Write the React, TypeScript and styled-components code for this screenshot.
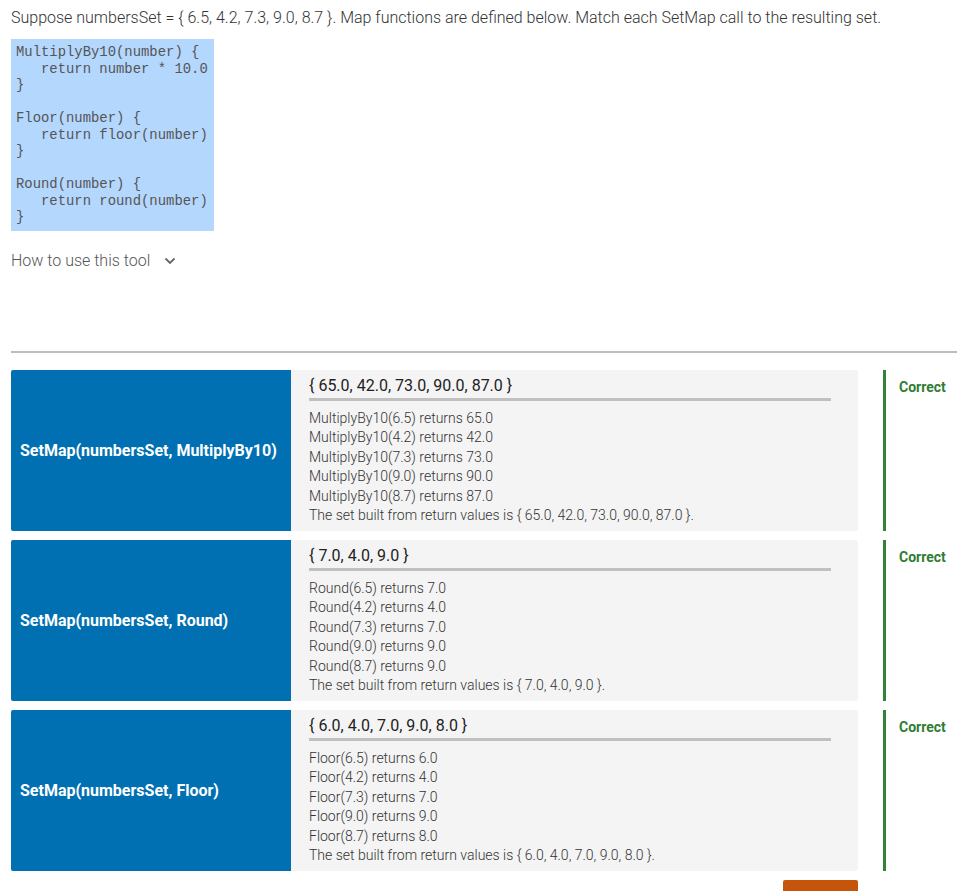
import styled, { createGlobalStyle } from "styled-components";

const GlobalStyle = createGlobalStyle`
  body {
    margin: 0;
    background: #ffffff;
    font-family: Roboto, "Liberation Sans", sans-serif;
    color: #333333;
  }
`;

const rows = [
  {
    call: "SetMap(numbersSet, MultiplyBy10)",
    fn: "MultiplyBy10",
    outs: ["65.0", "42.0", "73.0", "90.0", "87.0"],
  },
  {
    call: "SetMap(numbersSet, Round)",
    fn: "Round",
    outs: ["7.0", "4.0", "7.0", "9.0", "9.0"],
  },
  {
    call: "SetMap(numbersSet, Floor)",
    fn: "Floor",
    outs: ["6.0", "4.0", "7.0", "9.0", "8.0"],
  },
];

const inputs = ["6.5", "4.2", "7.3", "9.0", "8.7"];

function uniq(list: string[]) {
  return list.filter((v, i) => list.indexOf(v) === i);
}

export default function App() {
  return (
    <>
      <GlobalStyle />
      <Page>
        <Intro>
          Suppose numbersSet = {"{"} 6.5, 4.2, 7.3, 9.0, 8.7 {"}"}. Map functions are defined
          below. Match each SetMap call to the resulting set.
        </Intro>
        <Code>{`MultiplyBy10(number) {
   return number * 10.0
}

Floor(number) {
   return floor(number)
}

Round(number) {
   return round(number)
}`}</Code>
        <HowTo>
          How to use this tool
          <svg width="12" height="8" viewBox="0 0 12 8">
            <path d="M1.5 1.5 L6 6 L10.5 1.5" fill="none" stroke="#666" strokeWidth="1.8" />
          </svg>
        </HowTo>
        <Divider />
        <Rows>
          {rows.map((r) => {
            const set = uniq(r.outs).join(", ");
            return (
              <Row key={r.call}>
                <CallBox>{r.call}</CallBox>
                <AnswerBox>
                  <SetTitle>{`{ ${set} }`}</SetTitle>
                  <Explain>
                    {inputs.map((x, i) => (
                      <div key={x}>
                        {r.fn}({x}) returns {r.outs[i]}
                      </div>
                    ))}
                    <div>The set built from return values is {`{ ${set} }`}.</div>
                  </Explain>
                </AnswerBox>
                <Feedback>Correct</Feedback>
              </Row>
            );
          })}
        </Rows>
        <Footer>
          <CheckButton />
        </Footer>
      </Page>
    </>
  );
}

const Page = styled.div`
  padding: 8px 3px 0 11px;
`;

const Intro = styled.p`
  margin: 0;
  font-size: 16px;
  font-weight: 300;
  line-height: 20px;
  color: #333;
`;

const Code = styled.pre`
  margin: 11px 0 0;
  width: 203px;
  box-sizing: border-box;
  padding: 5px 2px 5px 5px;
  background: #b4d7fe;
  font-family: "Liberation Mono", "Courier New", monospace;
  font-size: 13.9px;
  line-height: 16.5px;
  color: #555;
`;

const HowTo = styled.div`
  margin-top: 20px;
  display: flex;
  align-items: center;
  gap: 14px;
  font-size: 16px;
  font-weight: 300;
  line-height: 20px;
  color: #555;
`;

const Divider = styled.div`
  margin-top: 80px;
  height: 2px;
  background: #bdbdbd;
`;

const Rows = styled.div`
  margin-top: 17px;
  display: flex;
  flex-direction: column;
  gap: 9px;
`;

const Row = styled.div`
  display: grid;
  grid-template-columns: 280px 567px 1fr;
  height: 161px;
`;

const CallBox = styled.div`
  display: flex;
  align-items: center;
  padding: 0 9px;
  background: #0070b2;
  color: #fff;
  font-weight: 700;
  font-size: 16px;
  border-radius: 2px 0 0 2px;
`;

const AnswerBox = styled.div`
  background: #f4f4f4;
  border-radius: 0 3px 3px 0;
  padding: 6px 27px 0 18px;
`;

const SetTitle = styled.div`
  font-size: 16px;
  font-weight: 400;
  line-height: 20px;
  color: #222;
  padding-bottom: 2px;
  border-bottom: 3px solid #c0c0c0;
`;

const Explain = styled.div`
  margin-top: 8px;
  font-size: 14px;
  font-weight: 300;
  line-height: 19.6px;
  color: #333;
`;

const Feedback = styled.div`
  margin-left: 25px;
  border-left: 3px solid #34823a;
  padding: 9px 0 0 13px;
  color: #2f7d32;
  font-weight: 700;
  font-size: 14px;
  line-height: 16px;
`;

const Footer = styled.div`
  width: 847px;
  display: flex;
  justify-content: flex-end;
  margin-top: 9px;
`;

const CheckButton = styled.div`
  width: 75px;
  height: 30px;
  background: #c4550a;
  border-radius: 2px;
`;
